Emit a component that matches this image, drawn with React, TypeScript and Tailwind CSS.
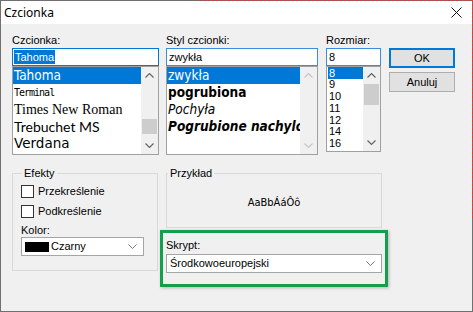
import React from 'react';

const tahoma = "font-['DejaVu_Sans_Condensed','DejaVu_Sans',sans-serif]";

const Chevron = ({ up, color }: { up?: boolean; color: string }) => (
  <svg width="9" height="5" viewBox="0 0 9 5">
    <path d={up ? 'M0.5 4.5 L4.5 0.5 L8.5 4.5' : 'M0.5 0.5 L4.5 4.5 L8.5 0.5'} stroke={color} strokeWidth="1.1" fill="none" />
  </svg>
);

const ScrollBar = ({ disabled, thumb }: { disabled?: boolean; thumb?: string }) => {
  const c = disabled ? '#c4c4c4' : '#606060';
  return (
    <div className="flex w-[17px] shrink-0 flex-col bg-[#f0f0f0]">
      <div className="flex h-[17px] items-center justify-center">
        <Chevron up color={c} />
      </div>
      <div className="flex-1">{thumb && <div className={thumb} />}</div>
      <div className="flex h-[17px] items-center justify-center">
        <Chevron color={c} />
      </div>
    </div>
  );
};

const Combo = ({ className, children }: { className: string; children: React.ReactNode }) => (
  <div className={`flex items-center justify-between border border-[#a5a5a5] bg-white pr-[6px] ${className}`}>
    <div className="flex items-center">{children}</div>
    <svg width="9" height="5" viewBox="0 0 9 5">
      <path d="M0.5 0.5 L4.5 4.5 L8.5 0.5" stroke="#777" strokeWidth="1" fill="none" />
    </svg>
  </div>
);

const Check = ({ label }: { label: string }) => (
  <div className="flex h-[13px] items-center gap-[4px]">
    <div className="h-[13px] w-[13px] border border-[#333] bg-white" />
    <span className="leading-[13px]">{label}</span>
  </div>
);

export default function App() {
  return (
    <div className="relative flex h-[312px] w-[473px] flex-col border border-[#707070] bg-[#f0f0f0] font-['Liberation_Sans',Arial,sans-serif] text-[11px] text-black">
      {/* title bar */}
      <div className="flex h-[23px] shrink-0 items-center justify-between bg-white pl-[3px] pr-[10px]">
        <span className="font-['Noto_Sans',sans-serif] text-[12px]">Czcionka</span>
        <svg width="11" height="11" viewBox="0 0 11 11">
          <path d="M0.5 0.5 L10.5 10.5 M10.5 0.5 L0.5 10.5" stroke="#111" strokeWidth="1" />
        </svg>
      </div>

      <div className="flex flex-col pl-[11px] pt-[10px]">
        {/* top row */}
        <div className="flex items-start">
          <div className="flex w-[147px] flex-col">
            <div className="h-[14px] leading-[13px]">Czcionka:</div>
            <div className="flex h-[18px] items-center border border-[#0078d7] bg-white pl-px">
              <span className="bg-[#0078d7] px-px leading-[14px] text-white">Tahoma</span>
            </div>
            <div className="flex h-[89px] border border-[#a0a0a0] bg-white">
              <div className="flex flex-1 flex-col overflow-hidden whitespace-nowrap">
                <div className={`flex h-[17px] items-center bg-[#0078d7] pl-px text-[13.5px] text-white ${tahoma}`}>Tahoma</div>
                <div className="flex h-[17px] items-center pl-px font-['DejaVu_Sans_Mono',monospace] text-[10px] tracking-[-1px]">Terminal</div>
                <div className="flex h-[17px] items-center pl-px font-['Liberation_Serif',serif] text-[14px]">Times New Roman</div>
                <div className="flex h-[17px] items-center pl-px font-['Lato',sans-serif] text-[14px]">Trebuchet MS</div>
                <div className="flex h-[17px] items-center pl-px font-['DejaVu_Sans',sans-serif] text-[13.5px]">Verdana</div>
              </div>
              <ScrollBar thumb="mx-px mt-[35px] h-[15px] bg-[#cdcdcd]" />
            </div>
          </div>

          <div className="ml-[7px] flex w-[152px] flex-col">
            <div className="h-[14px] leading-[13px]">Styl czcionki:</div>
            <div className="flex h-[18px] items-center border border-[#3a8ee0] bg-white pl-[2px]">zwykła</div>
            <div className="flex h-[89px] border border-[#a0a0a0] bg-white">
              <div className={`flex flex-1 flex-col overflow-hidden whitespace-nowrap text-[13.5px] ${tahoma}`}>
                <div className="flex h-[17px] items-center bg-[#0078d7] pl-px text-white">zwykła</div>
                <div className="flex h-[17px] items-center pl-px font-bold">pogrubiona</div>
                <div className="flex h-[17px] items-center pl-px italic">Pochyła</div>
                <div className="flex h-[17px] items-center pl-px font-bold italic">Pogrubione nachylone</div>
              </div>
              <ScrollBar disabled />
            </div>
          </div>

          <div className="ml-[8px] flex w-[55px] flex-col">
            <div className="h-[14px] leading-[13px]">Rozmiar:</div>
            <div className="flex h-[18px] items-center border border-[#3a8ee0] bg-white pl-[2px]">8</div>
            <div className="flex h-[86px] border border-[#a0a0a0] bg-white">
              <div className="flex flex-1 flex-col pl-px">
                <div className="flex h-[11.75px] items-center bg-[#0078d7] pl-px text-white">8</div>
                {['9', '10', '11', '12', '14', '16'].map((s) => (
                  <div key={s} className="flex h-[11.75px] items-center pl-px">
                    {s}
                  </div>
                ))}
              </div>
              <ScrollBar thumb="mx-px h-[21px] bg-[#cdcdcd]" />
            </div>
          </div>

          <div className="ml-[8px] mt-[14px] flex w-[66px] flex-col gap-[4px]">
            <button className="flex h-[20px] items-center justify-center border-2 border-[#0078d7] bg-[#e1e1e1] text-[11px]">OK</button>
            <button className="flex h-[20px] items-center justify-center border border-[#adadad] bg-[#e1e1e1] text-[11px]">Anuluj</button>
          </div>
        </div>

        {/* bottom row */}
        <div className="mt-[12px] flex items-start">
          <fieldset className="h-[104px] w-[146px] border border-[#d9d9d9] pl-[8px]">
            <legend className="ml-[1px] px-[2px] leading-[13px]">Efekty</legend>
            <div className="mt-[5px]">
              <Check label="Przekreślenie" />
            </div>
            <div className="mt-[7px]">
              <Check label="Podkreślenie" />
            </div>
            <div className="mt-[6px] h-[13px] leading-[13px]">Kolor:</div>
            <Combo className="h-[19px] w-[123px] pl-[3px]">
              <div className="h-[10px] w-[24px] bg-black" />
              <span className="ml-[2px]">Czarny</span>
            </Combo>
          </fieldset>

          <div className="ml-[8px] flex w-[216px] flex-col">
            <fieldset className="h-[61px] w-[216px] border border-[#d9d9d9]">
              <legend className="ml-[1px] px-[2px] leading-[13px]">Przykład</legend>
              <div className={`flex h-[46px] items-center justify-center text-[11px] ${tahoma}`}>AaBbÁáÔô</div>
            </fieldset>
            <div className="mt-[11px] h-[13px] leading-[13px]">Skrypt:</div>
            <Combo className="mt-[2px] h-[19px] w-[216px] pl-[3px]">
              <span>Środkowoeuropejski</span>
            </Combo>
          </div>
        </div>
      </div>

      {/* annotation + selection marquee */}
      <div className="pointer-events-none absolute left-[159px] top-[229px] h-[57px] w-[228px] border-[3px] border-[#13a04c] shadow-[1px_1px_3px_rgba(0,0,0,0.25)]" />
      <div className="absolute left-[199px] right-[-1px] top-[-1px] h-px bg-[repeating-linear-gradient(90deg,#e0392f_0_2px,transparent_2px_4px)]" />
      <div className="absolute right-[-1px] top-[-1px] h-[218px] w-px bg-[repeating-linear-gradient(180deg,#e0392f_0_2px,transparent_2px_4px)]" />
    </div>
  );
}
